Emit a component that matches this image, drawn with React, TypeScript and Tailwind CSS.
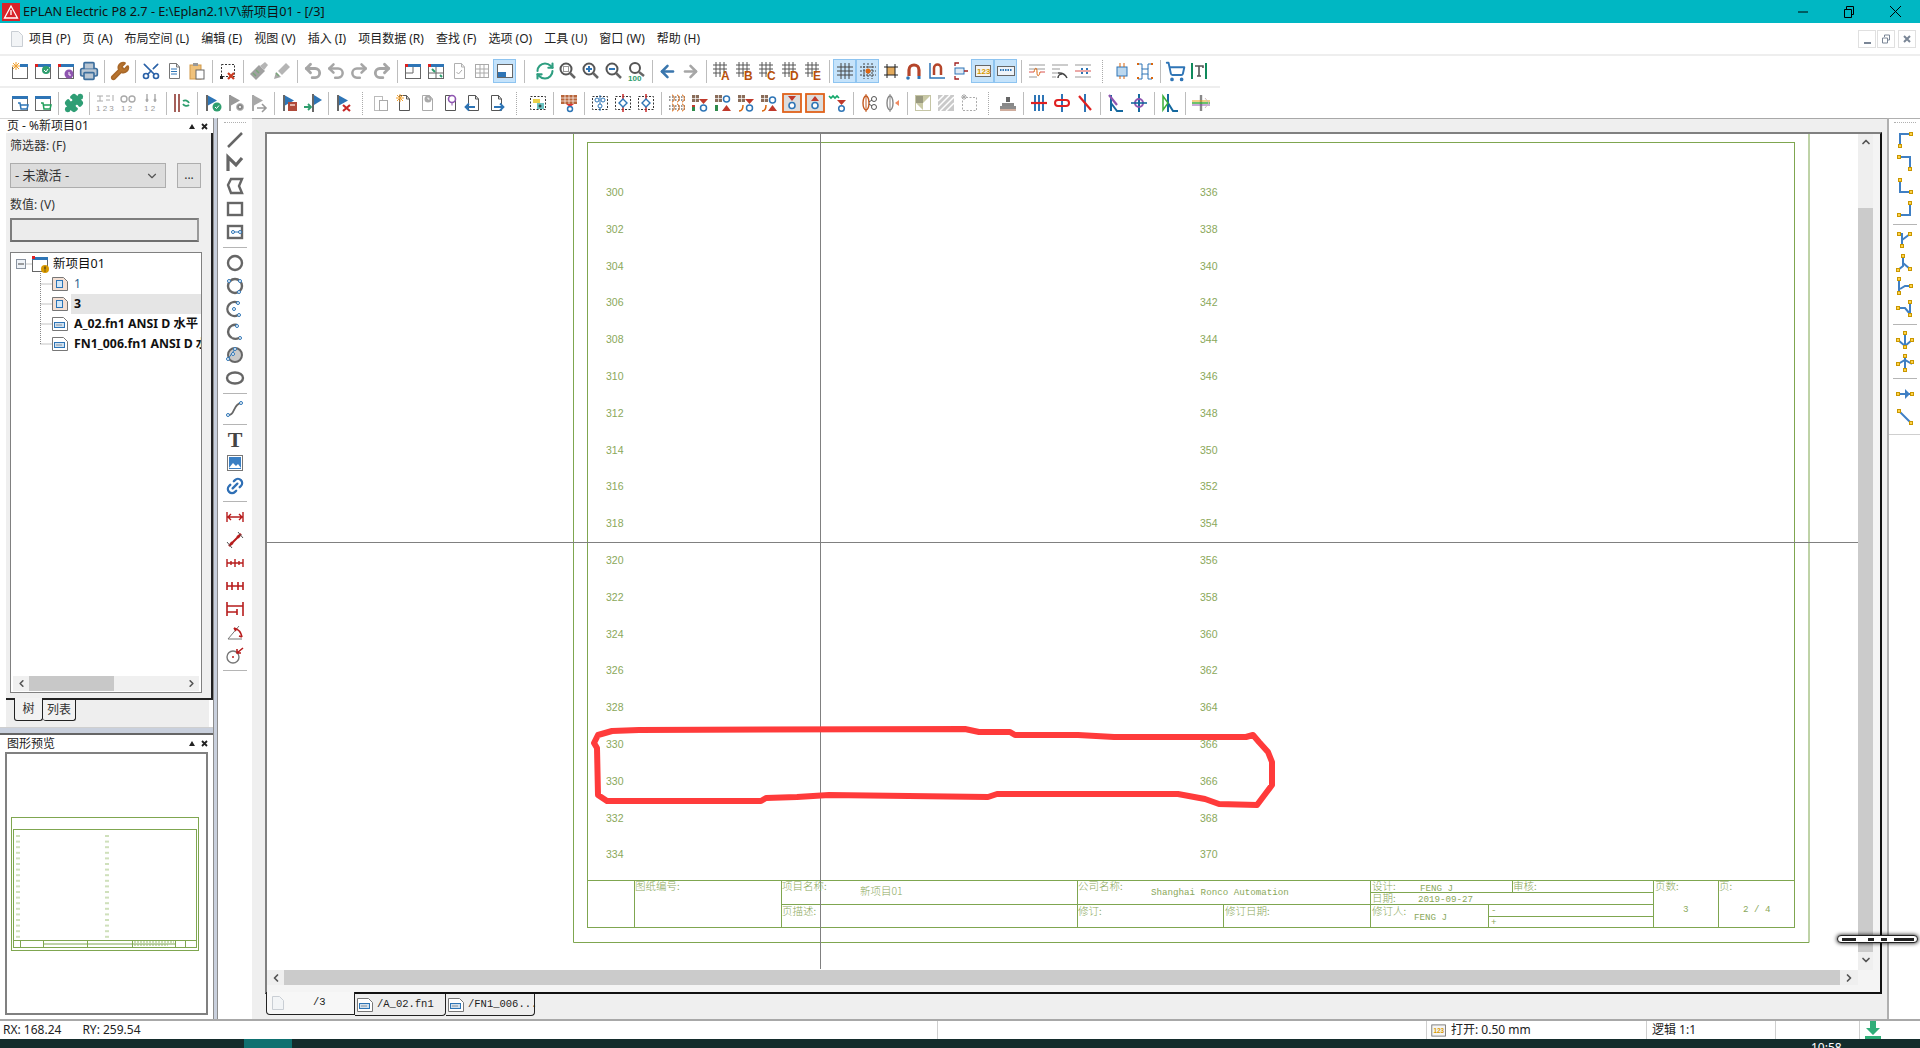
import React from 'react'
import {
  ArrowLeft, ArrowRight, ChevronDown, ChevronLeft, ChevronRight, ChevronUp, Link2, Printer,
  Puzzle, Redo2, RefreshCw, Scissors, ShoppingCart, Undo2, Wrench,
} from 'lucide-react'

const blue = '#2e75b6'
const dk = '#555'
const red = '#c62828'
const grn = '#2e9e6e'
const or = '#d9650c'
const gr = '#a6a6a6'
const line = '#7fa650'
const sheetText = '#8aa85a'

const Svg = ({ children, s = 20 }: { children: React.ReactNode; s?: number }) => (
  <svg width={s} height={s} viewBox="0 0 20 20" fill="none" className="shrink-0">{children}</svg>
)

const Win = ({ children }: { children?: React.ReactNode }) => (
  <>
    <rect x="2.5" y="3.5" width="15" height="14" fill="#fff" stroke="#666" />
    <rect x="2" y="3" width="16" height="3" fill={blue} />
    <rect x="2" y="3" width="3" height="3" fill="#e02020" />
    {children}
  </>
)
const Doc = ({ c = dk, children }: { c?: string; children?: React.ReactNode }) => (
  <>
    <path d="M5.5 2.5h7l3 3.5v11.5h-10z" fill="#fff" stroke={c} />
    <path d="M12.5 2.5V6h3" stroke={c} />
    {children}
  </>
)
const Hash = ({ l }: { l: string }) => (
  <>
    <path d="M4 1v15M8 1v15M12 1v11M1 4h14M1 8h14M1 12h8" stroke="#555" />
    <text x="9" y="19" fontSize="12" fontWeight="700" fill="#b8500a" className="font-['Liberation_Sans',sans-serif]">{l}</text>
  </>
)
const Flag = ({ c = blue, p = '#666', children }: { c?: string; p?: string; children?: React.ReactNode }) => (
  <>
    <rect x="3" y="2" width="2" height="16" fill={p} />
    <path d="M5 2.5l9 5-9 5z" fill={c} />
    {children}
  </>
)
const Dash = ({ children }: { children?: React.ReactNode }) => (
  <>
    <rect x="2.5" y="3.5" width="15" height="13" stroke="#333" strokeDasharray="2 1.5" />
    {children}
  </>
)
const Sym = ({ o = false }: { o?: boolean }) => (
  <>
    <rect x="2" y="2" width="7" height="7" fill="#8a6d5a" />
    <path d="M5.5 2v7M2 5.5h7" stroke="#fff" strokeWidth=".7" />
    <path d="M9 6h9l-4.500 5z" fill={o ? '#e03a20' : '#c0392b'} />
    <circle cx="13.500" cy="15" r="3" stroke={blue} strokeWidth="1.500" />
  </>
)
const Node = ({ x, y }: { x: number; y: number }) => (
  <rect x={x - 1.5} y={y - 1.5} width="3" height="3" fill="#ffd24a" stroke="#c99700" />
)
const Conn = ({ d, pts }: { d: string; pts: number[][] }) => (
  <>
    <path d={d} stroke="#3f7fc4" strokeWidth="2" />
    {pts.map((p, i) => <Node key={i} x={p[0]} y={p[1]} />)}
  </>
)
const Cn = ({ x, y }: { x: number; y: number }) => <circle cx={x} cy={y} r="1.500" fill="#fff" stroke={blue} />
const Dim = ({ children }: { children: React.ReactNode }) => <g stroke="#b71c1c" strokeWidth="1.400">{children}</g>

const icons: Record<string, React.ReactNode> = {
  projNew: <Svg><Win /><rect x="2" y="3" width="16" height="3" fill="#fff" /><rect x="10" y="3" width="8" height="3" fill={blue} /><path d="M6 1v8M2 5h8M3 2l6 6M9 2L3 8" stroke="#f0a030" /></Svg>,
  projOpen: <Svg><Win /><circle cx="13" cy="9" r="4" fill={grn} /><path d="M11 9l2 2 2-3" stroke="#fff" /></Svg>,
  projRestore: <Svg><Win /><circle cx="13" cy="13" r="4.500" fill="#8e55b0" /><path d="M13 11v3h2" stroke="#fff" /></Svg>,
  print: <Printer size={20} color="#3d6f9e" fill="#b9c6d3" strokeWidth={2} />,
  wrench: <Wrench size={20} color="#a8682a" fill="#b9752f" strokeWidth={2} />,
  cut: <Scissors size={20} color="#2b62a8" strokeWidth={2} className="-rotate-90" />,
  copy: <Svg><Doc c="#777"><path d="M7 8h6M7 10.500h6M7 13h6" stroke={blue} /></Doc></Svg>,
  paste: <Svg><rect x="3" y="4" width="11" height="14" fill="#f0c27b" stroke="#d29a4a" /><rect x="6" y="2" width="5" height="3" fill="#999" /><rect x="9" y="9" width="8" height="9" fill="#fff" stroke="#666" /></Svg>,
  delSel: <Svg><rect x="3.500" y="3.500" width="13" height="12" stroke="#333" strokeDasharray="2 1.500" /><rect x="2" y="15" width="3" height="3" fill="#222" /><path d="M10 12l6 6M16 12l-6 6" stroke="#c93a20" strokeWidth="2.200" /></Svg>,
  brush1: <Svg><path d="M1 13l9-9 6 6-9 9z" fill="#a0a0a0" /><path d="M11 5l5-4 3 3-4 5z" fill="#b5b5b5" /><path d="M4 12l3 3M7 9l3 3" stroke="#79a779" strokeWidth="1.500" /></Svg>,
  brush2: <Svg><path d="M2 18l2-7 5 5z" fill="#a8a8a8" /><path d="M6 10l8-8 4 4-8 8z" fill="#b5b5b5" /><path d="M4 12l3 3" stroke="#79a779" strokeWidth="1.500" /></Svg>,
  undoA: <Undo2 size={20} color={gr} strokeWidth={3.400} />,
  undo: <Undo2 size={20} color={gr} strokeWidth={3} />,
  redo: <Redo2 size={20} color={gr} strokeWidth={3} />,
  redoA: <Redo2 size={20} color={gr} strokeWidth={3.400} />,
  winSplit: <Svg><Win /><path d="M10 6v6M3 12h7" stroke="#666" /></Svg>,
  winArrow: <Svg><Win /><path d="M10 6v11M3 12h14" stroke="#666" /><path d="M6 8l3 3M14 14l2 2" stroke={grn} strokeWidth="2" /></Svg>,
  docCheck: <Svg><Doc c="#b0b0b0"><path d="M7.500 11l2 2 3.500-4" stroke="#aaa" /></Doc></Svg>,
  table: <Svg><rect x="3.500" y="3.500" width="13" height="13" stroke="#aaa" /><path d="M3.500 8h13M3.500 12h13M8 3.500v13M12 3.500v13" stroke="#aaa" /></Svg>,
  winSel: <Svg><rect x="2.500" y="3.500" width="15" height="13" fill="#fff" stroke="#666" /><rect x="3" y="11" width="8" height="5" fill={blue} /></Svg>,
  refresh: <RefreshCw size={20} color="#2e9e80" strokeWidth={2.500} />,
  zoomWin: <Svg><circle cx="8" cy="8" r="5.500" stroke="#555" strokeWidth="2" /><rect x="5.500" y="5.500" width="5" height="5" stroke="#333" strokeDasharray="1 1" /><path d="M12 12l5 5" stroke="#666" strokeWidth="2.500" /></Svg>,
  zoomIn: <Svg><circle cx="8" cy="8" r="5.500" stroke="#555" strokeWidth="2" /><path d="M5 8h6M8 5v6" stroke={blue} strokeWidth="2" /><path d="M12 12l5 5" stroke="#666" strokeWidth="2.500" /></Svg>,
  zoomOut: <Svg><circle cx="8" cy="8" r="5.500" stroke="#555" strokeWidth="2" /><path d="M5 8h6" stroke={blue} strokeWidth="2" /><path d="M12 12l5 5" stroke="#666" strokeWidth="2.500" /></Svg>,
  zoom100: <Svg><circle cx="8" cy="7" r="5" stroke="#555" strokeWidth="2" /><path d="M12 11l5 4" stroke="#666" strokeWidth="2.500" /><text x="1" y="19.500" fontSize="8" fontWeight="700" fill="#2e9e6e" className="font-['Liberation_Sans',sans-serif]">100</text></Svg>,
  left: <ArrowLeft size={19} color="#3a76ad" strokeWidth={3.200} />,
  right: <ArrowRight size={19} color={gr} strokeWidth={3.200} />,
  gA: <Svg><Hash l="A" /></Svg>,
  gB: <Svg><Hash l="B" /></Svg>,
  gC: <Svg><Hash l="C" /></Svg>,
  gD: <Svg><Hash l="D" /></Svg>,
  gE: <Svg><Hash l="E" /></Svg>,
  grid: <Svg><path d="M6 2v16M10 2v16M14 2v16M2 6h16M2 10h16M2 14h16" stroke="#444" /></Svg>,
  gridSnap: <Svg><path d="M6 2v16M10 2v16M14 2v16M2 6h16M2 10h16M2 14h16" stroke="#444" strokeDasharray="2 1" /><circle cx="10" cy="10" r="2.500" fill="#e0660f" /></Svg>,
  gridBox: <Svg><rect x="6" y="6" width="8" height="8" fill="#e3aa5c" /><path d="M6 3v14M14 3v14M3 6h14M3 14h14" stroke="#222" /></Svg>,
  magnet: <Svg><path d="M5 15V9a5 5 0 0110 0v6" stroke="#b5452a" strokeWidth="3.200" /><circle cx="4" cy="17" r="1.800" fill={blue} /><rect x="13.500" y="15" width="3" height="3" fill={blue} /></Svg>,
  magnetAxis: <Svg><path d="M3 2v15h15" stroke={blue} strokeWidth="1.500" /><path d="M7 14V7a3.500 3.500 0 017 0v7" stroke="#b5452a" strokeWidth="2.500" /></Svg>,
  conn: <Svg><rect x="5" y="7" width="9" height="6" fill="#dfeaf5" stroke={blue} /><path d="M9 2H5v3M9 18H5v-3M14 10h4" stroke="#a02020" strokeWidth="1.300" /></Svg>,
  num: <Svg><rect x="2.500" y="4.500" width="15" height="11" fill="#f2f2f2" stroke="#666" /><text x="4" y="13" fontSize="8" fontWeight="700" fill="#d89a00" className="font-['Liberation_Sans',sans-serif]">123</text></Svg>,
  pathBox: <Svg><rect x="1.500" y="5.500" width="17" height="9" fill="#eef3f9" stroke="#666" /><path d="M4 9h12" stroke={blue} strokeDasharray="1.500 1" strokeWidth="2" /></Svg>,
  wave: <Svg><path d="M2 4h16M2 8h16M2 16h8" stroke="#999" /><path d="M2 11h5M13 11h5" stroke="#d9534f" /><path d="M7 11c1-5 3-5 3 0s2 5 3 0" stroke={or} /></Svg>,
  rss: <Svg><path d="M2 4h16M2 8h8M2 12h6M2 16h4" stroke="#999" /><path d="M8 17a4 4 0 014-4M8 12a9 9 0 019 5" stroke="#444" strokeWidth="1.500" /></Svg>,
  net: <Svg><path d="M2 4h16M2 16h16" stroke="#999" /><path d="M2 10h16" stroke="#d9534f" /><path d="M8 7h2v2H8zM13 7h2v2h-2zM8 11h2v2H8zM13 11h2v2h-2z" fill={blue} /></Svg>,
  chip: <Svg><rect x="5" y="6" width="10" height="9" fill="#bcd8ef" stroke={blue} /><path d="M8 2v4M12 2v4M8 15v3M12 15v3" stroke={or} /></Svg>,
  chipLink: <Svg><rect x="7" y="8" width="6" height="5" stroke={blue} /><path d="M3 3h4v5M17 3h-4v5M3 18h4v-5M17 18h-4v-5" stroke={blue} /><path d="M2 2h2v2H2zM16 2h2v2h-2zM2 16h2v2H2zM16 16h2v2h-2z" fill={or} /></Svg>,
  cart: <ShoppingCart size={21} color="#2f75b6" strokeWidth={2.200} />,
  textT: <Svg><path d="M3 2v16M17 2v16" stroke="#0f8a5c" strokeWidth="2" /><path d="M6 5h8v2M10 5v10M8 15h4" stroke="#555" strokeWidth="1.600" /></Svg>,

  winCartB: <Svg><Win /><rect x="2" y="3" width="3" height="3" fill={blue} /><path d="M8 10h2l1 6h6l1-4h-7" stroke={blue} strokeWidth="1.500" /></Svg>,
  winCartG: <Svg><Win /><rect x="2" y="3" width="3" height="3" fill={blue} /><path d="M8 10h2l1 6h6l1-4h-7" stroke="#1f9e5a" strokeWidth="1.500" /></Svg>,
  puzzle: <Puzzle size={20} color="#2f9e75" fill="#2f9e75" strokeWidth={2} />,
  io123: <Svg><path d="M2 3h6M2 8h6M5 3v5M11 3h4M11 7h4M18 2v6" stroke="#aaa" /><text x="1" y="18" fontSize="8" fill="#999" className="font-['Liberation_Sans',sans-serif]">1 2 3</text></Svg>,
  io12: <Svg><circle cx="6" cy="6" r="3" stroke="#aaa" strokeWidth="1.400" /><circle cx="14" cy="6" r="3" stroke="#aaa" strokeWidth="1.400" /><text x="3" y="18" fontSize="8" fill="#999" className="font-['Liberation_Sans',sans-serif]">1 2</text></Svg>,
  io12b: <Svg><path d="M6 1v8M14 1v8" stroke="#aaa" strokeWidth="1.400" /><circle cx="6" cy="7" r="1.500" fill="#aaa" /><circle cx="14" cy="7" r="1.500" fill="#aaa" /><text x="3" y="18" fontSize="8" fill="#999" className="font-['Liberation_Sans',sans-serif]">1 2</text></Svg>,
  barsRefresh: <Svg><rect x="2" y="1" width="2" height="18" fill="#a5605a" /><rect x="6" y="1" width="2" height="18" fill="#a5605a" /><path d="M11 8a4 4 0 016 2M17 12a4 4 0 01-6-1" stroke={grn} strokeWidth="1.800" /></Svg>,
  flagCheck: <Svg><Flag><circle cx="14" cy="14" r="4.500" fill={grn} /><path d="M12 14l1.500 1.500 2.500-3" stroke="#fff" /></Flag></Svg>,
  flagGear: <Svg><Flag c="#999" p="#999"><circle cx="14" cy="14" r="3.500" fill="#888" stroke="#bbb" /><circle cx="14" cy="14" r="1" fill="#fff" /></Flag></Svg>,
  flagArrow: <Svg><Flag c="#a8a8a8" p="#a8a8a8"><path d="M8 15h8M13 11l4 4-4 4" stroke="#999" strokeWidth="1.600" /></Flag></Svg>,
  flagBook: <Svg><Flag><rect x="8" y="9" width="9" height="9" fill="#b04a3a" /><rect x="10" y="11" width="5" height="2" fill="#e3b3a8" /></Flag></Svg>,
  flagIn: <Svg><rect x="9" y="1" width="2" height="18" fill="#666" /><path d="M11 2l8 5-8 5z" fill={blue} /><path d="M1 14h7M5 11l3 3-3 3" stroke={grn} strokeWidth="1.800" /></Svg>,
  flagX: <Svg><Flag><path d="M9 12l7 6M16 12l-7 6" stroke={red} strokeWidth="2.200" /></Flag></Svg>,
  docs: <Svg><rect x="3.500" y="3.500" width="8" height="14" stroke="#bbb" /><rect x="8.500" y="7.500" width="8" height="10" fill="#fff" stroke="#aaa" /></Svg>,
  docSun: <Svg><Doc c="#555"><path d="M6 1v8M2 5h8M3 2l6 6M9 2L3 8" stroke="#f0a030" /></Doc></Svg>,
  docClock: <Svg><Doc c="#aaa"><circle cx="11" cy="6" r="3.500" fill="#aaa" /><path d="M11 4.500V6h1.500" stroke="#fff" /></Doc></Svg>,
  docPin: <Svg><Doc c="#555"><circle cx="12" cy="6" r="3.500" fill="#fff" stroke="#8e55b0" strokeWidth="1.600" /><path d="M12 9.500v3" stroke="#8e55b0" /></Doc></Svg>,
  docLeft: <Svg><Doc c="#555"><path d="M12 14H3M6 10.500L2.500 14 6 17.500" stroke={blue} strokeWidth="1.800" /></Doc></Svg>,
  docRight: <Svg><Doc c="#555"><path d="M8 14h9M14 10.500l3.500 3.500-3.500 3.500" stroke={blue} strokeWidth="1.800" /></Doc></Svg>,
  dashGreen: <Svg><Dash /><rect x="5" y="6" width="7" height="4" fill="#ead04a" /><rect x="9" y="10" width="7" height="6" fill="#6cc5c5" /><path d="M10.500 13h3M12 11.500v3" stroke="#222" /></Svg>,
  gridDots: <Svg><rect x="2" y="2" width="16" height="9" fill="#b8653a" /><path d="M2 5h16M2 8h16M6 2v9M10 2v9M14 2v9" stroke="#fff" strokeWidth=".7" /><path d="M7 11h8l-4 3z" fill="#d33" /><circle cx="11" cy="16" r="2.500" stroke={blue} strokeWidth="1.500" /></Svg>,
  dashCirc: <Svg><Dash><path d="M10 2v16" stroke={blue} /><circle cx="7" cy="7" r="2" fill="#fff" stroke={blue} /><circle cx="13" cy="7" r="2" fill="#fff" stroke={blue} /><circle cx="10" cy="13" r="2" fill="#fff" stroke={blue} /></Dash></Svg>,
  dashDiamond: <Svg><Dash><path d="M10 1v18" stroke={red} strokeWidth="1.500" /><path d="M10 6l4 4-4 4-4-4z" fill="#fff" stroke={blue} strokeWidth="1.400" /></Dash></Svg>,
  coils: <Svg><path d="M2 4h16M2 7h16M2 13h16M2 16h16" stroke="#333" strokeDasharray="1.500 1.500" /><path d="M5 2c3 0 3 7 0 7M10 2c3 0 3 7 0 7M15 2c3 0 3 7 0 7M5 11c3 0 3 7 0 7M10 11c3 0 3 7 0 7M15 11c3 0 3 7 0 7" stroke={or} /></Svg>,
  sym1: <Svg><Sym /><rect x="2" y="12" width="3" height="6" fill="#2d8a4a" /><rect x="2" y="12" width="3" height="2" fill="#c0392b" /></Svg>,
  sym2: <Svg><rect x="2" y="2" width="7" height="7" fill="#8a6d5a" /><path d="M5.500 2v7M2 5.500h7" stroke="#fff" strokeWidth=".7" /><circle cx="13.500" cy="6" r="3" stroke={blue} strokeWidth="1.500" /><path d="M9 18h9l-4.500-6z" fill="#c0392b" /><rect x="2" y="12" width="3" height="6" fill="#2d8a4a" /></Svg>,
  sym3: <Svg><Sym /><path d="M3 18c3 0 4-3 4-6" stroke={or} strokeWidth="1.500" /></Svg>,
  sym4: <Svg><rect x="2" y="2" width="7" height="7" fill="#8a6d5a" /><path d="M5.500 2v7M2 5.500h7" stroke="#fff" strokeWidth=".7" /><path d="M9 18h9l-4.500-6z" fill="#c0392b" /><path d="M3 18c3 0 4-3 4-6" stroke={or} strokeWidth="1.500" /><circle cx="13.500" cy="7" r="3" stroke={blue} strokeWidth="1.500" /></Svg>,
  boxDown: <Svg><rect x="1" y="1" width="18" height="18" fill="#ddd" stroke="#e0621a" strokeWidth="1.800" /><path d="M6 3h8l-4 5z" fill="#c0392b" /><circle cx="10" cy="12.500" r="3" fill="#fff" stroke={blue} strokeWidth="1.600" /></Svg>,
  boxUp: <Svg><rect x="1" y="1" width="18" height="18" fill="#ddd" stroke="#e0621a" strokeWidth="1.800" /><path d="M10 3l4 5H6z" fill="#c0392b" /><circle cx="10" cy="12.500" r="3" fill="#fff" stroke={blue} strokeWidth="1.600" /></Svg>,
  greenDown: <Svg><path d="M1 3l2 2 2-2 2 2 2-2 2 2" stroke="#12a86a" strokeWidth="1.600" /><path d="M9 7h9l-4.500 5z" fill="#c0392b" /><circle cx="13.500" cy="15.500" r="2.800" stroke={blue} strokeWidth="1.500" /></Svg>,
  coilA: <Svg><path d="M7 1v18" stroke="#c45a20" /><ellipse cx="7" cy="10" rx="3" ry="7" stroke="#c45a20" strokeWidth="1.400" /><circle cx="15" cy="6" r="2.500" stroke="#555" /><circle cx="15" cy="14" r="2.500" stroke="#555" /><path d="M10 9l3-2M10 11l3 2" stroke="#555" /></Svg>,
  coilB: <Svg><path d="M8 1v18" stroke="#888" /><ellipse cx="8" cy="10" rx="3" ry="7" stroke="#888" strokeWidth="1.400" /><path d="M13 10l4-3v6z" fill="#f08a60" /></Svg>,
  fade: <Svg><rect x="2.500" y="2.500" width="15" height="15" stroke="#c5c5a5" /><rect x="3" y="3" width="7" height="7" fill="#9a9a80" /><path d="M10 3h7l-7 7zM3 10h7v7z" fill="#c9c9a5" /></Svg>,
  hatch: <Svg><rect x="2" y="2" width="16" height="16" fill="#c9c9c9" /><path d="M2 8l6-6M2 14L14 2M4 18L18 4M10 18l8-8" stroke="#fff" strokeWidth="1.500" /></Svg>,
  star: <Svg><rect x="3.500" y="4.500" width="14" height="13" stroke="#aaa" strokeDasharray="2 1.500" /><path d="M5 1v6M2 4h6M3 2l4 4M7 2L3 6" stroke="#aaa" /></Svg>,
  stamp: <Svg><rect x="8" y="4" width="4" height="5" fill="#666" /><path d="M4 13v-3h12v3z" fill="#888" /><rect x="2" y="13" width="16" height="3" fill="#8c8c8c" /><path d="M2 17h16" stroke="#a05a3a" /></Svg>,
  bars1: <Svg><path d="M6 2v16M10 2v16M14 2v16" stroke={blue} strokeWidth="2" /><path d="M2 10h16" stroke="#e02020" strokeWidth="2.200" /></Svg>,
  bars2: <Svg><path d="M10 1v18" stroke={blue} strokeWidth="2" /><rect x="3" y="7" width="14" height="6" rx="3" stroke="#e02020" strokeWidth="2" /></Svg>,
  bars3: <Svg><path d="M10 1v18" stroke={blue} strokeWidth="2" /><path d="M4 3l12 14" stroke="#e02020" strokeWidth="2.200" /></Svg>,
  kink1: <Svg><path d="M5 2v16M5 10l6 8h6" stroke="#14689e" strokeWidth="2" /><path d="M3 2l8 10" stroke="#8e55b0" strokeWidth="2.200" /></Svg>,
  kink2: <Svg><path d="M10 1v18" stroke="#14689e" strokeWidth="2" /><circle cx="10" cy="10" r="4" stroke="#8e55b0" strokeWidth="2" /><path d="M2 10h16" stroke="#14689e" strokeWidth="1.600" /></Svg>,
  kink3: <Svg><path d="M8 1v18M8 10l5 8h5" stroke="#14689e" strokeWidth="2" /><path d="M3 3v14l5-7z" stroke="#3aae3a" strokeWidth="1.500" /></Svg>,
  rainbow: <Svg><path d="M10 2v16" stroke="#888" strokeWidth="2.400" /><path d="M1 8h18" stroke="#e3a010" /><path d="M1 10h18" stroke="#3aae3a" strokeWidth="1.500" /><path d="M1 12h18" stroke="#8e55b0" /><path d="M14 5l4 5-4 5" stroke="#cbb" /></Svg>,

  line: <Svg><path d="M3 17L17 3" stroke="#666" strokeWidth="2.500" /></Svg>,
  poly: <Svg><path d="M3 18V4l8 8 6-7" stroke="#666" strokeWidth="3.200" /></Svg>,
  polygon: <Svg><path d="M3 9l3-6h11l-3 7 3 7H6z" stroke="#666" strokeWidth="2.400" /></Svg>,
  rect: <Svg><rect x="3" y="4" width="14" height="12" stroke="#666" strokeWidth="2.400" /></Svg>,
  rectNode: <Svg><rect x="3" y="4" width="14" height="12" stroke="#666" strokeWidth="2.400" /><path d="M8 10h8" stroke={blue} /><Cn x={8} y={10} /><Cn x={15} y={10} /></Svg>,
  circle: <Svg><circle cx="10" cy="10" r="7" stroke="#666" strokeWidth="2.400" /></Svg>,
  circleN: <Svg><circle cx="10" cy="10" r="7" stroke="#666" strokeWidth="2.400" /><Cn x={4} y={5} /><Cn x={15} y={5} /><Cn x={14} y={16} /></Svg>,
  arcA: <Svg><path d="M13 4a7 7 0 100 12" stroke="#666" strokeWidth="2.400" /><Cn x={13} y={4} /><Cn x={9} y={10} /><Cn x={14} y={16} /></Svg>,
  arcB: <Svg><path d="M12 3a7 7 0 00-5 13" stroke="#666" strokeWidth="2.400" /><Cn x={12} y={4} /><Cn x={15} y={16} /><path d="M7 16c2 1 5 1 7 0" stroke="#666" strokeWidth="2" /></Svg>,
  pie: <Svg><circle cx="10" cy="10" r="7" fill="#c9c9c9" stroke="#666" strokeWidth="2" /><path d="M3 14L10 4" stroke={blue} /><Cn x={10} y={4} /><Cn x={8} y={9} /><Cn x={3} y={14} /></Svg>,
  ellipse: <Svg><ellipse cx="10" cy="10" rx="8" ry="5.500" stroke="#666" strokeWidth="2.400" /></Svg>,
  spline: <Svg><path d="M4 16c6 0 4-11 12-12" stroke="#666" strokeWidth="1.800" /><Cn x={3} y={16} /><Cn x={16} y={4} /></Svg>,
  image: <Svg><rect x="2.500" y="2.500" width="15" height="15" stroke="#777" /><rect x="4" y="4" width="12" height="12" fill="#3a7fc4" /><path d="M4 15l4-5 3 3 2-2 3 4z" fill="#fff" /></Svg>,
  link: <Link2 size={20} color="#2f6fb5" strokeWidth={2.800} className="-rotate-45" />,
  d1: <Svg><Dim><path d="M2 5v10M18 5v10M3 10h14M6 7l-3 3 3 3M14 7l3 3-3 3" /></Dim></Svg>,
  d2: <Svg><Dim><path d="M4 16L16 4M8 13l-4 3 3-4M12 7l4-3-3 4" strokeWidth="2" /><path d="M2 12l5 6M13 2l5 6" stroke="#555" strokeWidth="1" /></Dim></Svg>,
  d3: <Svg><Dim><path d="M2 6v8M10 6v8M18 6v8M2 10h16M6 8v4M14 8v4" /></Dim></Svg>,
  d4: <Svg><Dim><path d="M2 6v8M7 6v8M13 6v8M18 6v8M2 10h16" strokeWidth="1.600" /></Dim></Svg>,
  d5: <Svg><Dim><path d="M2 3v14M18 3v14M2 7h16M2 13h10M12 10v6" strokeWidth="1.600" /></Dim></Svg>,
  d6: <Svg><path d="M3 17h14M3 17L14 4" stroke="#777" /><Dim><path d="M9 6c4 1 7 4 8 9M17 15l-3-1M9 6l2 3" strokeWidth="1.600" /></Dim></Svg>,
  d7: <Svg><circle cx="8" cy="12" r="6" stroke="#777" strokeWidth="1.400" /><circle cx="8" cy="12" r="1" fill="#b71c1c" /><path d="M18 3l-6 5M12 4v4h4" stroke="#b71c1c" strokeWidth="1.600" /></Svg>,

  c1: <Svg><Conn d="M5 16V4h11" pts={[[5, 16], [16, 4]]} /></Svg>,
  c2: <Svg><Conn d="M4 4h11v12" pts={[[4, 4], [15, 16]]} /></Svg>,
  c3: <Svg><Conn d="M5 4v12h11" pts={[[5, 4], [16, 16]]} /></Svg>,
  c4: <Svg><Conn d="M15 4v12H4" pts={[[15, 4], [4, 16]]} /></Svg>,
  c5: <Svg><Conn d="M4 4h3v12M7 10l8-6" pts={[[4, 4], [15, 4], [7, 16]]} /></Svg>,
  c6: <Svg><Conn d="M8 3v10L3 17M8 10l7 6" pts={[[8, 3], [3, 17], [15, 16]]} /></Svg>,
  c7: <Svg><Conn d="M4 3v14M5 13l5-3h6" pts={[[4, 3], [4, 17], [16, 10]]} /></Svg>,
  c8: <Svg><Conn d="M3 9h7l5 6M15 3v12" pts={[[3, 9], [15, 3], [15, 16]]} /></Svg>,
  c9: <Svg><Conn d="M10 3v13M3 10l7 6 7-6" pts={[[10, 3], [3, 10], [17, 10], [10, 17]]} /></Svg>,
  c10: <Svg><Conn d="M10 3v14M3 11l7-4 7 4" pts={[[10, 3], [3, 11], [17, 9], [10, 17]]} /></Svg>,
  c11: <Svg><Conn d="M3 10h14" pts={[[3, 10], [17, 10]]} /><path d="M10 5l5 5-5 5z" fill="#3f7fc4" /></Svg>,
  c12: <Svg><Conn d="M4 4l12 12" pts={[[4, 4], [16, 16]]} /></Svg>,
}

const SEP: Record<string, string> = {
  '|': 'w-[8px]',
  '|17': 'w-[17px]',
  ':16': 'w-[16px]',
  ':14': 'w-[14px]',
  ':19': 'w-[19px]',
}

const bar1 = 'projNew projOpen projRestore print | wrench | cut copy paste | delSel | brush1 brush2 | undoA undo redo redoA | winSplit winArrow docCheck table *winSel |17 refresh zoomWin zoomIn zoomOut zoom100 | left right | gA gB gC gD gE | *grid *gridSnap gridBox magnet magnetAxis conn *num *pathBox | wave rss net :16 chip chipLink | cart textT'
const bar2 = 'winCartB winCartG | puzzle | io123 io12 io12b | barsRefresh | flagCheck flagGear flagArrow | flagBook flagIn | flagX :14 docs docSun docClock docPin docLeft docRight :19 dashGreen | gridDots | dashCirc dashDiamond dashDiamond | coils sym1 sym2 sym3 sym4 boxDown boxUp greenDown | coilA coilB | fade hatch star :16 stamp | bars1 bars2 bars3 | kink1 kink2 | kink3 | rainbow'

function Toolbar({ items, className }: { items: string; className: string }) {
  return (
    <div className={`flex items-center pl-[8px] h-[32px] border-t-2 border-[#eeeeee] bg-white ${className}`}>
      {items.split(' ').map((it, i) => {
        if (it[0] === '|' || it[0] === ':') {
          return (
            <div key={i} className={`flex justify-center shrink-0 ${SEP[it]}`}>
              <div className={`h-[23px] ${it[0] === '|' ? 'border-l border-[#bdbdbd]' : 'border-l border-dotted border-[#aaaaaa]'}`} />
            </div>
          )
        }
        const sel = it[0] === '*'
        return (
          <div key={i} className={`w-[23px] h-[24px] flex items-center justify-center shrink-0 ${sel ? 'bg-[#c5e3fb] border border-[#8ec4f0]' : ''}`}>
            {icons[sel ? it.slice(1) : it]}
          </div>
        )
      })}
    </div>
  )
}

const menus = ['项目 (P)', '页 (A)', '布局空间 (L)', '编辑 (E)', '视图 (V)', '插入 (I)', '项目数据 (R)', '查找 (F)', '选项 (O)', '工具 (U)', '窗口 (W)', '帮助 (H)']

function TitleBar() {
  return (
    <div className="h-[23px] bg-[#00b7c3] flex items-center shrink-0">
      <svg width="18" height="18" viewBox="0 0 18 18" className="ml-[2px]">
        <rect width="18" height="18" fill="#d8232a" />
        <path d="M9 3L2.500 15h13zM9 7v5" stroke="#fff" strokeWidth="1.300" fill="none" />
      </svg>
      <span className="ml-[3px] text-[12.700px] text-[#111] font-['Noto_Sans','Noto_Sans_CJK_SC',sans-serif]">EPLAN Electric P8 2.7 - E:\Eplan2.1\7\新项目01 - [/3]</span>
      <div className="ml-auto flex items-center">
        <svg width="46" height="23" viewBox="0 0 46 23"><path d="M18 12h10" stroke="#000" /></svg>
        <svg width="46" height="23" viewBox="0 0 46 23"><path d="M18.500 9.500h7v8h-7zM20.500 9V6.500h7v8H26" stroke="#000" fill="none" /></svg>
        <svg width="46" height="23" viewBox="0 0 46 23" className="mr-[2px]"><path d="M18 6l11 11M29 6L18 17" stroke="#000" /></svg>
      </div>
    </div>
  )
}

function MenuBar() {
  return (
    <div className="h-[31px] bg-white flex items-center pl-[10px] shrink-0 text-[12px] text-[#222]">
      <svg width="14" height="18" viewBox="0 0 14 18"><path d="M1.500 1.500h7l4 4v11h-11z" fill="#f2f4f6" stroke="#c9ced4" /></svg>
      <div className="flex gap-[12px] ml-[5px]">
        {menus.map(m => <span key={m} className="whitespace-nowrap">{m}</span>)}
      </div>
      <div className="ml-auto flex gap-[1px] mr-[4px]">
        <div className="w-[18px] h-[18px] border border-[#e0e0e0] flex items-end justify-center pb-[3px]"><div className="w-[7px] h-[2px] bg-[#7a8696]" /></div>
        <div className="w-[18px] h-[18px] border border-[#e0e0e0] flex items-center justify-center">
          <svg width="10" height="10" viewBox="0 0 10 10"><path d="M1.500 4h5v5h-5zM3.500 3V1h5v5H7" stroke="#7a8696" fill="none" /></svg>
        </div>
        <div className="w-[18px] h-[18px] ml-[2px] border border-[#e0e0e0] flex items-center justify-center">
          <svg width="10" height="10" viewBox="0 0 10 10"><path d="M2 2l6 6M8 2L2 8" stroke="#7a8696" strokeWidth="2" /></svg>
        </div>
      </div>
    </div>
  )
}

const DockButtons = () => (
  <div className="ml-auto flex items-center gap-[6px] mr-[5px]">
    <svg width="6" height="5" viewBox="0 0 6 5"><path d="M3 0l3 5H0z" fill="#222" /></svg>
    <svg width="7" height="7" viewBox="0 0 7 7"><path d="M1 1l5 5M6 1L1 6" stroke="#222" strokeWidth="1.800" /></svg>
  </div>
)

const PageIcon = () => (
  <svg width="16" height="14" viewBox="0 0 16 14" className="shrink-0">
    <path d="M.5.5h11l4 4v9H.5z" fill="#f4e0d4" stroke="#777" />
    <rect x="4.500" y="3.500" width="6" height="7" fill="#d5e8f7" stroke="#2e75b6" />
  </svg>
)
const SheetIcon = () => (
  <svg width="16" height="14" viewBox="0 0 16 14" className="shrink-0">
    <path d="M.5.5h11l4 4v9H.5z" fill="#fff" stroke="#777" />
    <rect x="2.500" y="5.500" width="10" height="5" fill="#cfe0ef" stroke="#2e75b6" />
    <path d="M4.500 8h6" stroke="#444" strokeDasharray="1 1" />
  </svg>
)

function TreeRow({ bold, sel, icon, children }: { bold?: boolean; sel?: boolean; icon: React.ReactNode; children: React.ReactNode }) {
  return (
    <div className="h-5 flex items-center pl-[41px] relative">
      {icon}
      <div className={`ml-[3px] flex-1 h-5 flex items-center pl-[3px] overflow-hidden whitespace-nowrap ${bold ? 'font-bold text-[#111] text-[12.300px]' : 'text-[#2a5f8f]'} ${sel ? 'bg-[#e5e5e5]' : ''}`}>{children}</div>
    </div>
  )
}

function ProjectPanel() {
  return (
    <div className="h-[567px] ml-[6px] pl-[4px] pt-[4px] bg-[#efefef] border-r-2 border-b-2 border-[#222] flex flex-col">
      <div className="h-[18px] leading-[18px]">筛选器: (F)</div>
      <div className="flex gap-[11px] mt-[8px]">
        <div className="w-[156px] h-[25px] bg-[#dcdcdc] border border-[#adadad] flex items-center px-[4px]">
          <span className="text-[13px]">- 未激活 -</span>
          <ChevronDown size={14} color="#555" className="ml-auto mr-[2px]" />
        </div>
        <div className="w-[24px] h-[25px] bg-[#e2e2e2] border border-[#adadad] text-center leading-[22px]">...</div>
      </div>
      <div className="h-[18px] leading-[18px] mt-[8px]">数值: (V)</div>
      <div className="w-[189px] h-[24px] mt-[4px] bg-[#ececec] border-2 border-[#7d7d7d] border-r-[#9a9a9a] border-b-[#6f6f6f]" />
      <div className="w-[192px] h-[441px] mt-[10px] bg-white border border-[#808080] flex flex-col relative">
        <svg width="60" height="100" viewBox="0 0 60 100" className="absolute left-0 top-0">
          <path d="M14.500 11h7M29.500 20v71M29.500 31h11M29.500 51h11M29.500 71h11M29.500 91h11" stroke="#888" strokeDasharray="1 1" fill="none" />
        </svg>
        <div className="h-5 flex items-center pl-[5px] mt-[1px] relative">
          <svg width="10" height="10" viewBox="0 0 10 10" className="shrink-0"><rect x=".5" y=".5" width="9" height="9" fill="#eef2f7" stroke="#8a93a0" /><path d="M2 5h6" stroke="#444" /></svg>
          <svg width="18" height="17" viewBox="0 0 18 17" className="ml-[6px] shrink-0">
            <rect x=".5" y="1.500" width="15" height="14" fill="#fff" stroke="#666" />
            <rect y="1" width="16" height="3" fill="#2e75b6" />
            <rect y="0" width="3" height="3" fill="#e02020" />
            <circle cx="13" cy="13" r="4" fill="#d99a00" />
            <path d="M13 10.500v3M13 14.500v1" stroke="#222" />
          </svg>
          <span className="ml-[3px] text-[12.500px] text-[#111]">新项目01</span>
        </div>
        <TreeRow icon={<PageIcon />}>1</TreeRow>
        <TreeRow icon={<PageIcon />} bold sel>3</TreeRow>
        <TreeRow icon={<SheetIcon />} bold>A_02.fn1 ANSI D 水平</TreeRow>
        <TreeRow icon={<SheetIcon />} bold>FN1_006.fn1 ANSI D 水平</TreeRow>
        <div className="mt-auto mx-[2px] mb-[1px] h-[15px] bg-[#f0f0f0] flex items-center">
          <div className="w-[16px] flex justify-center"><ChevronLeft size={11} color="#555" strokeWidth={3.500} /></div>
          <div className="w-[85px] h-full bg-[#c8c8c8]" />
          <div className="ml-auto w-[16px] flex justify-center"><ChevronRight size={11} color="#555" strokeWidth={3.500} /></div>
        </div>
      </div>
    </div>
  )
}

function Thumb() {
  const ys = Array.from({ length: 19 }, (_, i) => 836 + i * 5.6)
  return (
    <svg width="199" height="259" viewBox="7 755 199 259" className="block">
      <rect x="11.500" y="818.500" width="187" height="133" stroke={line} fill="none" />
      <rect x="13.500" y="830.500" width="183" height="118" stroke={line} fill="none" />
      <path d="M13.500 941.500h183M20.500 941.500v7M43.500 941.500v7M87.500 941.500v7M132.500 941.500v7M175.500 941.500v7M185.500 941.500v7M43.500 945h132" stroke={line} />
      <path d="M134 943h40M134 946h34" stroke="#9dbb74" strokeDasharray="2 1" />
      {ys.map(y => <g key={y}><rect x="16" y={y} width="4" height="2" fill="#cfe0bb" /><rect x="105" y={y} width="4" height="2" fill="#cfe0bb" /></g>)}
    </svg>
  )
}

function LeftDock() {
  return (
    <div className="w-[213px] bg-white shrink-0 flex flex-col text-[12px] text-[#333]">
      <div className="h-[15px] flex items-center pl-[7px] text-[#222] border-t border-[#d8d8d8]">页 - %新项目01<DockButtons /></div>
      <ProjectPanel />
      <div className="h-[27px] ml-[6px] mr-[4px] bg-[#eeeeee] flex pl-[8px] items-start">
        <div className="w-[29px] h-[23px] -mt-[2px] bg-[#f2f2f2] border-l border-r border-b border-[#222] rounded-b-[3px] text-center leading-[22px]">树</div>
        <div className="w-[33px] h-[21px] bg-[#f2f2f2] border-r border-b border-[#222] rounded-b-[3px] text-center leading-[19px]">列表</div>
      </div>
      <div className="h-[8px] border-b-2 border-t border-t-[#cfcfcf] border-b-[#666666] bg-[#c9d0dd]" />
      <div className="h-[17px] flex items-center pl-[7px] text-[#222]">图形预览<DockButtons /></div>
      <div className="mx-[5px] h-[263px] w-[203px] border-2 border-[#808080] bg-white"><Thumb /></div>
      <div className="flex-1" />
    </div>
  )
}

const Cell = ({ n }: { n: string }) => <div className="h-[23px] flex items-center justify-center">{icons[n]}</div>
const Rule = ({ className = 'w-[24px]' }: { className?: string }) => (
  <div className="h-[8px] flex items-center justify-center"><div className={`h-px bg-[#b5b5b5] ${className}`} /></div>
)
const Grip = () => <div className="h-[6px] mx-auto w-[22px] border-t border-dotted border-[#b0b0b0] mt-[3px]" />

function LeftStrip() {
  return (
    <div className="w-[34px] bg-white shrink-0 flex flex-col border-t border-[#d8d8d8]">
      <Grip />
      {['line', 'poly', 'polygon', 'rect', 'rectNode'].map(n => <Cell key={n} n={n} />)}
      <Rule />
      {['circle', 'circleN', 'arcA', 'arcB', 'pie', 'ellipse'].map(n => <Cell key={n} n={n} />)}
      <Rule />
      <Cell n="spline" />
      <Rule />
      {['T', 'image', 'link'].map(n => n === 'T'
        ? <div key={n} className="h-[23px] flex items-center justify-center text-[22px] font-bold text-[#444] font-['Liberation_Serif',serif]">T</div>
        : <Cell key={n} n={n} />)}
      <Rule />
      {['d1', 'd2', 'd3', 'd4', 'd5', 'd6', 'd7'].map(n => <Cell key={n} n={n} />)}
      <Rule />
    </div>
  )
}

function RightStrip() {
  return (
    <div className="w-[33px] bg-white shrink-0 border-l-2 border-t border-[#b0b0b0] flex flex-col">
      <Grip />
      {['c1', 'c2', 'c3', 'c4'].map(n => <Cell key={n} n={n} />)}
      <Rule />
      {['c5', 'c6', 'c7', 'c8'].map(n => <Cell key={n} n={n} />)}
      <Rule />
      {['c9', 'c10'].map(n => <Cell key={n} n={n} />)}
      <Rule />
      {['c11', 'c12'].map(n => <Cell key={n} n={n} />)}
      <div className="h-px bg-[#cfcfcf] mt-[6px]" />
    </div>
  )
}

const leftNums = ['300', '302', '304', '306', '308', '310', '312', '314', '316', '318', '320', '322', '324', '326', '328', '330', '330', '332', '334']
const rightNums = ['336', '338', '340', '342', '344', '346', '348', '350', '352', '354', '356', '358', '360', '362', '364', '366', '366', '368', '370']
const cjk = "text-[10.500px] font-['Noto_Sans_CJK_SC',sans-serif] font-light"
const mono = "text-[9.200px] font-['Liberation_Mono',monospace]"

const titleText: [number, number, string, string][] = [
  [635, 890, '图纸编号:', cjk], [782, 890, '项目名称:', cjk], [860, 895, '新项目01', cjk], [1078, 890, '公司名称:', cjk],
  [1151, 895, 'Shanghai Ronco Automation', mono], [782, 915, '页描述:', cjk], [1078, 915, '修订:', cjk], [1225, 915, '修订日期:', cjk],
  [1372, 890, '设计:', cjk], [1420, 891, 'FENG J', mono], [1513, 890, '审核:', cjk], [1372, 902, '日期:', cjk],
  [1418, 902, '2019-09-27', mono], [1372, 915, '修订人:', cjk], [1414, 920, 'FENG J', mono], [1491, 913, '-', mono],
  [1491, 925, '+', mono], [1655, 890, '页数:', cjk], [1683, 912, '3', mono], [1719, 890, '页:', cjk], [1743, 912, '2 / 4', mono],
]

const annotation = 'M598 735L612 731L639 730L965 729L979 732L1010 732L1015 735L1078 735L1114 737L1246 737L1253 735L1259 742L1268 752L1272 762L1272 785L1266 793L1257 805L1219 804L1205 799L1178 794L997 794L988 797L829 795L797 797L766 798L761 801L607 801L598 795L597 748L594 743Z'

function Sheet() {
  return (
    <svg width="1591" height="836" viewBox="267 134 1591 836" className="absolute left-0 top-0">
      <path d="M573.500 134v808.500h1235.500V134" stroke={line} fill="none" />
      <rect x="587.500" y="142.500" width="1207" height="785" stroke={line} fill="none" />
      <path d="M587 880.500h1207M781 904.500h589M634.500 880v47M781.500 880v47M1077.500 880v47M1223.500 904v23M1370.500 880v47M1653.500 880v47M1718.500 880v47M1370 892.500h283M1370 904.500h283M1488 916.500h165M1488.500 904v23M1512.500 880v12" stroke={line} fill="none" />
      <path d="M820.500 134v835M267 542.500h1591" stroke="#808080" />
      {leftNums.map((n, i) => (
        <text key={i} x="606" y={196 + i * 36.8} fill={sheetText} className="text-[10.500px] font-['Liberation_Sans',sans-serif]">{n}</text>
      ))}
      {rightNums.map((n, i) => (
        <text key={i} x="1200" y={196 + i * 36.8} fill={sheetText} className="text-[10.500px] font-['Liberation_Sans',sans-serif]">{n}</text>
      ))}
      {titleText.map(([x, y, t, c], i) => <text key={i} x={x} y={y} fill={sheetText} className={c}>{t}</text>)}
      <path d={annotation} stroke="#ff3b3b" strokeWidth="6" fill="none" strokeLinejoin="round" />
    </svg>
  )
}

function Workspace() {
  return (
    <div className="flex-1 min-w-0 bg-[#efefef] flex flex-col">
      <div className="h-[14px] shrink-0 border-t border-[#a8a8a8]" />
      <div className="ml-[13px] mr-[5px] h-[862px] border-t-2 border-l-2 border-[#808080] border-r-2 border-r-[#111] border-b-2 border-b-[#111] flex flex-col bg-[#f4f4f4]">
        <div className="h-[836px] flex">
          <div className="w-[1591px] h-full bg-white relative overflow-hidden"><Sheet /></div>
          <div className="w-[15px] bg-[#efefef] flex flex-col items-center">
            <div className="h-[74px] w-full flex justify-center pt-[2px]"><ChevronUp size={12} color="#555" strokeWidth={3.500} /></div>
            <div className="h-[744px] w-full bg-[#cbcbcb]" />
            <ChevronDown size={12} color="#555" strokeWidth={3.500} className="mt-[2px]" />
          </div>
        </div>
        <div className="h-[15px] w-[1591px] bg-[#efefef] flex items-center">
          <div className="w-[17px] flex justify-center"><ChevronLeft size={12} color="#555" strokeWidth={3.500} /></div>
          <div className="w-[1556px] h-full bg-[#cbcbcb]" />
          <div className="flex-1 flex justify-center"><ChevronRight size={12} color="#555" strokeWidth={3.500} /></div>
        </div>
      </div>
      <div className="flex-1 ml-[14px] flex items-start text-[10.500px] text-[#222] font-['Liberation_Mono',monospace]">
        <div className="w-[89px] h-[23px] -mt-[2px] bg-[#f7f7f7] border-l border-r border-b border-[#222] rounded-bl-[4px] flex items-center relative">
          <svg width="14" height="16" viewBox="0 0 14 16" className="ml-[4px]"><path d="M1.500 1.500h7l4 4v9h-11z" fill="#f2f4f6" stroke="#c9ced4" /></svg>
          <span className="ml-[28px]">/3</span>
        </div>
        <div className="w-[91px] h-[22px] bg-[#eeeeee] border-r border-b border-[#222] rounded-br-[4px] flex items-center pl-[2px]">
          <SheetIcon /><span className="ml-[4px]">/A_02.fn1</span>
        </div>
        <div className="w-[89px] h-[22px] bg-[#eeeeee] border-r border-b border-[#222] rounded-br-[4px] flex items-center pl-[2px]">
          <SheetIcon /><span className="ml-[4px]">/FN1_006...</span>
        </div>
      </div>
    </div>
  )
}

function StatusBar() {
  return (
    <div className="h-[20px] shrink-0 bg-white border-t-2 border-[#a8a8a8] flex items-center text-[12px] text-[#222] relative">
      <div className="w-[937px] pl-[3px] flex gap-[21px] shrink-0"><span>RX: 168.24</span><span>RY: 259.54</span></div>
      <div className="w-[489px] h-full border-l border-[#cfcfcf] shrink-0" />
      <div className="w-[220px] h-full border-l border-[#cfcfcf] shrink-0 flex items-center pl-[4px]">
        <svg width="16" height="15" viewBox="0 0 20 18"><rect x="1" y="2" width="17" height="14" fill="#f5f5f5" stroke="#666" /><text x="3" y="12" fontSize="8" fontWeight="700" fill="#d89a00" className="font-['Liberation_Sans',sans-serif]">123</text></svg>
        <span className="ml-[4px]">打开: 0.50 mm</span>
      </div>
      <div className="w-[129px] h-full border-l border-[#cfcfcf] shrink-0 pl-[5px] leading-[18px]">逻辑 1:1</div>
      <div className="w-[84px] h-full border-l border-[#cfcfcf] shrink-0" />
      <div className="flex-1 h-full border-l border-[#cfcfcf] flex pl-[4px]">
        <svg width="16" height="18" viewBox="0 0 16 18" className="ml-[1px]"><path d="M5 0h6v7h4l-7 7-7-7h4zM0 15h16v3H0z" fill="#2fae78" /></svg>
      </div>
    </div>
  )
}

export default function App() {
  return (
    <div className="w-[1920px] h-[1048px] overflow-hidden flex flex-col relative bg-white text-[12px] font-['Noto_Sans','Noto_Sans_CJK_SC',sans-serif]">
      <TitleBar />
      <MenuBar />
      <Toolbar items={bar1} className="w-full" />
      <Toolbar items={bar2} className="w-[1220px]" />
      <div className="h-[901px] flex shrink-0">
        <LeftDock />
        <div className="w-[5px] shrink-0 bg-[#c9d0dd] border-l border-r border-[#8d8d8d]" />
        <LeftStrip />
        <Workspace />
        <RightStrip />
      </div>
      <StatusBar />
      <div className="flex-1 bg-[#142c2c] flex relative overflow-hidden">
        <div className="ml-[244px] w-[48px] bg-[#0f7070]" />
        <span className="absolute left-[1811px] top-[2px] text-[12px] leading-[14px] text-white">10:58</span>
      </div>
      <div className="absolute left-[1837px] top-[935px] w-[81px] h-[8px] bg-white rounded-full border border-[#222] shadow-[0_0_4px_#000] flex items-center">
        <div className="ml-[4px] w-[14px] h-[3px] bg-[#222]" />
        <div className="ml-[12px] w-[6px] h-[3px] bg-[#222]" />
        <div className="ml-[7px] w-[6px] h-[3px] bg-[#222]" />
        <div className="ml-[7px] w-[20px] h-[3px] bg-[#222]" />
      </div>
    </div>
  )
}
